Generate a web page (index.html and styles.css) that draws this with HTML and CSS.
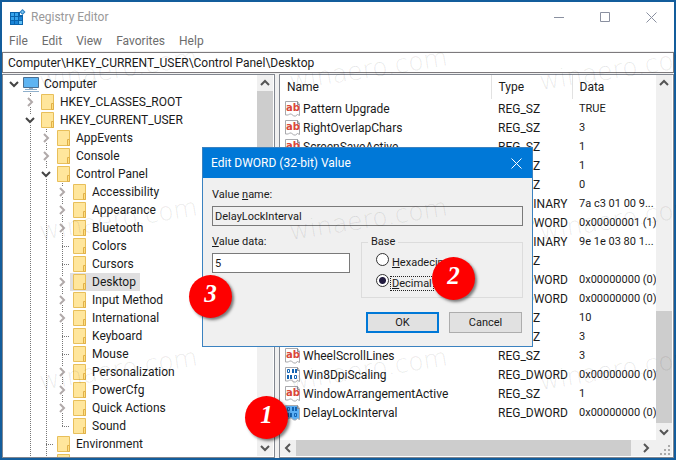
FILE: index.html
```html
<!DOCTYPE html>
<html lang="en">
<head>
  <meta charset="UTF-8" />
  <title>Registry Editor</title>
  <link rel="stylesheet" href="styles.css">
</head>
<body>

  <svg class="defs" width="0" height="0">
    <symbol id="folder" viewBox="0 0 13 16">
      <path d="M0.5 0.5h12v15h-12z" fill="#ffe69c" stroke="#e8bf5a"/>
      <path d="M10.5 9.5h2v6h-2z" fill="#ffe07e" stroke="#e0b04a"/>
    </symbol>
    <symbol id="open" viewBox="0 0 10 10"><path d="M1 3l4 4 4-4" fill="none" stroke="#444" stroke-width="2"/></symbol>
    <symbol id="closed" viewBox="0 0 10 10"><path d="M3 1l4 4-4 4" fill="none" stroke="#b0a9a9" stroke-width="2"/></symbol>
    <symbol id="page" viewBox="0 0 16 16">
      <path d="M0.500 0.500h12l2 3v11l-2-1-2 1.500h-2l-2-2h-2l-1 1h-3z" stroke="#a9a9ad"/>
      <path d="M12.500 0.500v3h2" fill="none" stroke="#8a8a90"/>
    </symbol>
    <symbol id="str" viewBox="0 0 16 16">
      <use href="#page" fill="#fff"/>
      <text x="1" y="10" class="ab">ab</text>
    </symbol>
    <symbol id="bin" viewBox="0 0 16 16">
      <use href="#page"/>
      <g fill="none" stroke="#1465b4">
        <path d="M2.500 2.500h2v3h-2zM9.500 8.500h2v3h-2z"/>
        <path d="M8 2v4M11 2v4M3 8v4M6 8v4" stroke-width="2"/>
      </g>
    </symbol>
  </svg>

  <div class="window">
    <header class="titlebar">
      <svg class="app-icon" width="16" height="16" viewBox="0 0 16 16">
        <path d="M0 3h10v3h3v10H0z" fill="#0a64ad"/>
        <path d="M1 4h3v3H1zM5 4h3v3H5zM1 8h3v3H1zM5 8h3v3H5z" fill="#37a5ee"/>
        <path d="M9 8h3v3H9zM1 12h3v3H1zM5 12h3v3H5z" fill="#1b84d6"/>
        <path d="M9 12h3v3H9z" fill="#61c0f5"/>
        <path d="M12.500 0l3 3-3 3-3-3z" fill="#2b7fc0"/>
        <path d="M12.500 1.500l1.500 1.500-1.500 1.500-1.500-1.500z" fill="#7cc8f5"/>
      </svg>
      <span class="title">Registry Editor</span>
      <button class="win-btn" aria-label="Minimize"><svg width="11" height="11"><path d="M0 5.500h10"/></svg></button>
      <button class="win-btn" aria-label="Maximize"><svg width="11" height="11"><path d="M0.500 0.500h9v9h-9z"/></svg></button>
      <button class="win-btn" aria-label="Close"><svg width="11" height="11"><path d="M0.500 0.500l10 10M10.500 0.500l-10 10"/></svg></button>
    </header>

    <nav class="menu">
      <a href="#">File</a>
      <a href="#">Edit</a>
      <a href="#">View</a>
      <a href="#">Favorites</a>
      <a href="#">Help</a>
    </nav>

    <input class="address" type="text" aria-label="Address" value="Computer\HKEY_CURRENT_USER\Control Panel\Desktop">

    <main class="panes">
      <section class="pane tree-pane">
        <ul class="tree">
          <li>
            <div class="node"><svg class="twisty"><use href="#open"/></svg><svg class="pc" viewBox="0 0 16 16"><path d="M0.500 1.500h15v10h-15z" fill="#5eb4f2" stroke="#4a6f92"/><path d="M6 12h4v1H6z" fill="#9ab"/><path d="M2 13.500h12M0 15.500h16" stroke="#8fb0cc"/></svg><span>Computer</span></div>
            <ul>
              <li><div class="node"><svg class="twisty"><use href="#closed"/></svg><svg class="folder"><use href="#folder"/></svg><span>HKEY_CLASSES_ROOT</span></div></li>
              <li>
                <div class="node"><svg class="twisty"><use href="#open"/></svg><svg class="folder"><use href="#folder"/></svg><span>HKEY_CURRENT_USER</span></div>
                <ul>
                  <li><div class="node"><svg class="twisty"><use href="#closed"/></svg><svg class="folder"><use href="#folder"/></svg><span>AppEvents</span></div></li>
                  <li><div class="node"><svg class="twisty"><use href="#closed"/></svg><svg class="folder"><use href="#folder"/></svg><span>Console</span></div></li>
                  <li>
                    <div class="node"><svg class="twisty"><use href="#open"/></svg><svg class="folder"><use href="#folder"/></svg><span>Control Panel</span></div>
                    <ul>
                      <li><div class="node"><svg class="twisty"><use href="#closed"/></svg><svg class="folder"><use href="#folder"/></svg><span>Accessibility</span></div></li>
                      <li><div class="node"><svg class="twisty"><use href="#closed"/></svg><svg class="folder"><use href="#folder"/></svg><span>Appearance</span></div></li>
                      <li><div class="node"><svg class="twisty"><use href="#closed"/></svg><svg class="folder"><use href="#folder"/></svg><span>Bluetooth</span></div></li>
                      <li><div class="node leaf"><svg class="folder"><use href="#folder"/></svg><span>Colors</span></div></li>
                      <li><div class="node leaf"><svg class="folder"><use href="#folder"/></svg><span>Cursors</span></div></li>
                      <li><div class="node selected"><svg class="twisty"><use href="#closed"/></svg><svg class="folder"><use href="#folder"/></svg><span>Desktop</span></div></li>
                      <li><div class="node"><svg class="twisty"><use href="#closed"/></svg><svg class="folder"><use href="#folder"/></svg><span>Input Method</span></div></li>
                      <li><div class="node"><svg class="twisty"><use href="#closed"/></svg><svg class="folder"><use href="#folder"/></svg><span>International</span></div></li>
                      <li><div class="node leaf"><svg class="folder"><use href="#folder"/></svg><span>Keyboard</span></div></li>
                      <li><div class="node leaf"><svg class="folder"><use href="#folder"/></svg><span>Mouse</span></div></li>
                      <li><div class="node"><svg class="twisty"><use href="#closed"/></svg><svg class="folder"><use href="#folder"/></svg><span>Personalization</span></div></li>
                      <li><div class="node"><svg class="twisty"><use href="#closed"/></svg><svg class="folder"><use href="#folder"/></svg><span>PowerCfg</span></div></li>
                      <li><div class="node"><svg class="twisty"><use href="#closed"/></svg><svg class="folder"><use href="#folder"/></svg><span>Quick Actions</span></div></li>
                      <li class="end"><div class="node leaf"><svg class="folder"><use href="#folder"/></svg><span>Sound</span></div></li>
                    </ul>
                  </li>
                  <li><div class="node leaf"><svg class="folder"><use href="#folder"/></svg><span>Environment</span></div></li>
                  <li><div class="node leaf"><svg class="folder"><use href="#folder"/></svg></div></li>
                </ul>
              </li>
            </ul>
          </li>
        </ul>
        <div class="vbar">
          <svg class="arrow"><path d="M1 7l4-4 4 4"/></svg>
          <div class="thumb tree-thumb"></div>
          <svg class="arrow"><path d="M1 3l4 4 4-4"/></svg>
        </div>
      </section>

      <section class="pane list-pane">
        <div class="list-body">
          <div class="list">
            <table>
              <colgroup><col><col class="col-type"><col class="col-data"></colgroup>
              <thead>
                <tr><th>Name</th><th>Type</th><th>Data</th></tr>
              </thead>
              <tbody>
                <tr><td><svg class="val"><use href="#str"/></svg>Pattern Upgrade</td><td>REG_SZ</td><td>TRUE</td></tr>
                <tr><td><svg class="val"><use href="#str"/></svg>RightOverlapChars</td><td>REG_SZ</td><td>3</td></tr>
                <tr><td><svg class="val"><use href="#str"/></svg>ScreenSaveActive</td><td>REG_SZ</td><td>1</td></tr>
                <tr><td></td><td>REG_SZ</td><td>1</td></tr>
                <tr><td></td><td>REG_SZ</td><td>0</td></tr>
                <tr><td></td><td>REG_BINARY</td><td>7a c3 01 00 9...</td></tr>
                <tr><td></td><td>REG_DWORD</td><td>0x00000001 (1)</td></tr>
                <tr><td></td><td>REG_BINARY</td><td>9e 1e 03 80 1...</td></tr>
                <tr><td></td><td>REG_SZ</td><td></td></tr>
                <tr><td></td><td>REG_DWORD</td><td>0x00000000 (0)</td></tr>
                <tr><td></td><td>REG_DWORD</td><td>0x00000000 (0)</td></tr>
                <tr><td></td><td>REG_SZ</td><td>10</td></tr>
                <tr><td></td><td>REG_SZ</td><td>3</td></tr>
                <tr><td><svg class="val"><use href="#str"/></svg>WheelScrollLines</td><td>REG_SZ</td><td>3</td></tr>
                <tr><td><svg class="val"><use href="#bin"/></svg>Win8DpiScaling</td><td>REG_DWORD</td><td>0x00000000 (0)</td></tr>
                <tr><td><svg class="val"><use href="#str"/></svg>WindowArrangementActive</td><td>REG_SZ</td><td>1</td></tr>
                <tr><td><svg class="val picked"><use href="#bin"/></svg>DelayLockInterval</td><td>REG_DWORD</td><td>0x00000000 (0)</td></tr>
              </tbody>
            </table>
          </div>
          <div class="vbar">
            <svg class="arrow"><path d="M1 7l4-4 4 4"/></svg>
            <div class="thumb list-thumb"></div>
            <svg class="arrow"><path d="M1 3l4 4 4-4"/></svg>
          </div>
        </div>
        <div class="hbar">
          <svg class="arrow"><path d="M7 1l-4 4 4 4"/></svg>
          <div class="thumb"></div>
          <svg class="arrow wide"><path d="M3 1l4 4-4 4"/></svg>
          <svg class="grip" viewBox="0 0 16 16"><path d="M12 5h2v2h-2zM8 9h2v2H8zM12 9h2v2h-2zM4 13h2v2H4zM8 13h2v2H8zM12 13h2v2h-2z" fill="#aaa"/></svg>
        </div>
      </section>
    </main>
  </div>

  <form class="dialog" onsubmit="return false">
    <div class="dialog-title">
      <span>Edit DWORD (32-bit) Value</span>
      <button type="button" aria-label="Close"><svg width="11" height="11"><path d="M0.500 0.500l10 10M10.500 0.500l-10 10"/></svg></button>
    </div>
    <div class="dialog-body">
      <label for="valueName">Value <u>n</u>ame:</label>
      <input id="valueName" class="field readonly" type="text" value="DelayLockInterval" readonly>
      <div class="dialog-cols">
        <div class="data-col">
          <label for="valueData"><u>V</u>alue data:</label>
          <input id="valueData" class="field" type="text" value="5">
        </div>
        <fieldset>
          <legend>Base</legend>
          <label><input type="radio" name="base"><span><u>H</u>exadecimal</span></label>
          <label><input type="radio" name="base" checked><span class="focused"><u>D</u>ecimal</span></label>
        </fieldset>
      </div>
      <div class="buttons">
        <button class="default">OK</button>
        <button type="button">Cancel</button>
      </div>
    </div>
  </form>

  <div class="badge step1">1</div>
  <div class="badge step2">2</div>
  <div class="badge step3">3</div>

  <div class="watermarks">
    <span>winaero.com</span><span>winaero.com</span><span>winaero.com</span>
    <span>winaero.com</span><span>winaero.com</span><span>winaero.com</span>
    <span>winaero.com</span><span>winaero.com</span><span>winaero.com</span>
  </div>

</body>
</html>
```
FILE: styles.css
```css
* {
  box-sizing: border-box;
}

body {
  margin: 0;
  height: 100vh;
  position: relative;
  overflow: hidden;
  background: #135d9c;
  font: 12px/18px Roboto, "Open Sans", sans-serif;
  color: #1a1a1a;
}

.defs {
  position: absolute;
}

.window {
  height: 100%;
  padding: 2px;
  display: flex;
  flex-direction: column;
}

/* title bar and menu */
.titlebar {
  display: flex;
  align-items: center;
  height: 30px;
  padding-left: 8px;
  background: #fff;
  color: #999;
}

.title {
  flex: 1;
  margin-left: 5px;
}

.win-btn {
  width: 46px;
  height: 28px;
  padding: 0;
  border: none;
  background: none;
}

.win-btn svg {
  display: block;
  margin: auto;
  fill: none;
  stroke: #8a90a0;
}

.menu {
  display: flex;
  gap: 14px;
  height: 20px;
  padding-left: 7px;
  background: #fff;
  border-bottom: 1px solid #f0f0f0;
}

.menu a {
  color: #6d6d6d;
  text-decoration: none;
}

.address {
  height: 21px;
  padding: 0 5px;
  border: 1px solid #7d7a7d;
  outline: none;
  font: inherit;
  color: inherit;
}

/* panes */
.panes {
  flex: 1;
  min-height: 0;
  display: flex;
  gap: 4px;
  background: #f0f0f0;
  padding-top: 1px;
}

.pane {
  background: #fff;
  border: 1px solid #828790;
  min-height: 0;
  padding: 0 1px 1px 0;
  overflow: hidden;
}

.tree-pane {
  display: flex;
  width: 273px;
}

.tree {
  flex: 1;
}

.tree,
.tree ul {
  margin: 0;
  padding: 0;
  list-style: none;
}

.tree {
  padding-left: 3px;
}

.tree ul {
  margin-left: 16px;
}

/* dotted guide under the arrows */
.tree ul li {
  background: linear-gradient(#777 1px, transparent 1px) 8px 0 / 1px 2px repeat-y;
}

.tree li.end {
  background: repeating-linear-gradient(#777 0 1px, transparent 1px 2px) 8px 0 / 1px 9px no-repeat;
}

.node {
  display: flex;
  align-items: center;
  height: 18px;
}

.node span {
  padding: 0 4px 0 3px;
}

.twisty {
  width: 16px;
  height: 10px;
  background: #fff;
}

.folder {
  width: 19px;
  height: 16px;
}

.pc {
  width: 16px;
  height: 16px;
  margin: 0 2px 0 1px;
}

.leaf {
  padding-left: 16px;
  background: repeating-linear-gradient(90deg, #777 0 1px, transparent 1px 2px) 8px 9px / 8px 1px no-repeat;
}

.selected .folder,
.selected span {
  height: 18px;
  background: #e0dfe0;
}

.selected .folder {
  padding: 1px 0;
}

/* scroll bars */
.vbar {
  display: flex;
  flex-direction: column;
  justify-content: space-between;
  width: 16px;
  background: #f0f0f0;
}

.thumb {
  background: #cdcdcd;
}

.tree-thumb {
  height: 40%;
  margin-bottom: auto;
}

.list-thumb {
  height: 112px;
  margin: auto 0 1px;
}

.arrow {
  width: 10px;
  height: 10px;
  margin: 3px;
  flex: none;
  fill: none;
  stroke: #555;
  stroke-width: 2;
}

.hbar {
  display: flex;
  height: 16px;
  background: #f0f0f0;
}

.hbar .thumb {
  flex: 1;
}

.wide {
  margin: 3px 5px 3px 10px;
}

.grip {
  width: 16px;
  height: 16px;
}

/* value list */
.list-pane {
  flex: 1;
  display: flex;
  flex-direction: column;
}

.list-body {
  flex: 1;
  min-height: 0;
  display: flex;
}

.list {
  flex: 1;
  overflow: hidden;
}

table {
  width: 100%;
  table-layout: fixed;
  border-collapse: collapse;
}

.col-type {
  width: 81px;
}

.col-data {
  width: 84px;
}

th {
  height: 24px;
  padding: 0 0 0 7px;
  border-right: 1px solid #e2e2e2;
  font-weight: normal;
  text-align: left;
}

th:last-child {
  border-right: none;
}

td {
  height: 19px;
  padding: 0 0 0 7px;
  white-space: nowrap;
}

td:first-child {
  padding-left: 5px;
}

td:last-child {
  font-size: 11px;
}

.val {
  width: 16px;
  height: 16px;
  margin-right: 2px;
  vertical-align: middle;
  fill: #fff;
}

.picked {
  fill: #5cb0f5;
}

.ab {
  font: bold 10px "DejaVu Sans", sans-serif;
  fill: #d9463a;
}

/* dialog */
.dialog {
  position: absolute;
  left: 202px;
  top: 147px;
  width: 331px;
  border: 1px solid #3b82c0;
  background: #f0f0f0;
  font-size: 11px;
  line-height: 16px;
}

.dialog-title {
  display: flex;
  align-items: center;
  justify-content: space-between;
  height: 30px;
  padding: 0 10px 0 8px;
  background: #0078d7;
  color: #fff;
  font-size: 12px;
}

.dialog-title button {
  padding: 0;
  border: none;
  background: none;
  line-height: 0;
}

.dialog-title svg {
  fill: none;
  stroke: #fff;
}

.dialog-body {
  padding: 9px;
}

.dialog-body label {
  display: block;
}

.field {
  display: block;
  width: 100%;
  height: 20px;
  margin-top: 3px;
  padding: 0 2px;
  border: 1px solid #7a7a7a;
  outline: none;
  background: #fff;
  color: inherit;
  font: inherit;
}

.readonly {
  background: #f0f0f0;
}

.dialog-cols {
  display: flex;
  gap: 11px;
  margin-top: 8px;
}

.data-col {
  flex: 1;
}

fieldset {
  width: 162px;
  margin: 0;
  padding: 3px 14px 2px;
  border: 1px solid #dcdcdc;
}

legend {
  margin-left: -8px;
  padding: 0 3px;
}

fieldset label {
  display: flex;
  align-items: center;
  height: 21px;
}

fieldset input {
  appearance: none;
  width: 13px;
  height: 13px;
  margin: 0 2px 0 0;
  border: 1px solid #333;
  border-radius: 50%;
  background: #fff;
}

fieldset input:checked {
  background: radial-gradient(#221c40 0 3px, #fff 4px);
}

fieldset span {
  padding: 0 1px;
}

.focused {
  outline: 1px dotted #222;
}

.buttons {
  display: flex;
  justify-content: flex-end;
  gap: 10px;
  margin-top: 14px;
  padding: 0 1px 4px 0;
}

.buttons button {
  width: 73px;
  height: 21px;
  padding: 0;
  border: 1px solid #adadad;
  background: #e1e1e1;
  color: inherit;
  font: inherit;
}

.buttons .default {
  border: 2px solid #0078d7;
}

/* numbered steps */
.badge {
  position: absolute;
  width: 43px;
  height: 43px;
  border-radius: 50%;
  background: #fe0000;
  box-shadow: 2px 2px 3px rgba(0, 0, 0, 0.5);
  color: #fff;
  font: italic bold 25px/38px "Liberation Serif", serif;
  text-align: center;
}

.step1 {
  left: 245px;
  top: 396px;
}

.step2 {
  left: 432px;
  top: 257px;
}

.step3 {
  left: 189px;
  top: 275px;
}

.watermarks {
  position: absolute;
  inset: 0;
  padding: 66px 0 0 42px;
  overflow: hidden;
  display: grid;
  grid-template-columns: repeat(3, 250px);
  grid-auto-rows: 150px;
  pointer-events: none;
  color: rgba(0, 0, 0, 0.09);
  font: 200 25px/32px "DejaVu Sans", sans-serif;
}

.watermarks span {
  transform: rotate(-9deg);
  transform-origin: 0 100%;
  height: 32px;
}
```
